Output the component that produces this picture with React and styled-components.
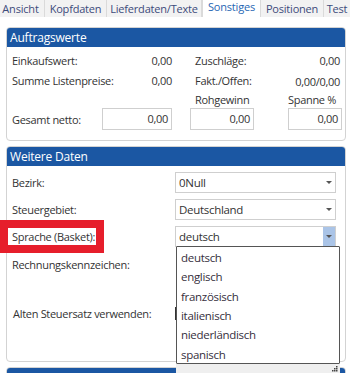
import React from 'react';
import styled, { createGlobalStyle } from 'styled-components';

const Global = createGlobalStyle`
  html, body { margin: 0; padding: 0; overflow: hidden; background: #fff; }
  body {
    font-family: "Open Sans", "Noto Sans", sans-serif;
    font-size: 11px;
    letter-spacing: -0.3px;
    color: #333;
  }
  *, *::before, *::after { box-sizing: border-box; }
`;

const Page = styled.div`
  width: 350px;
  height: 373px;
  overflow: hidden;
`;

const TabBar = styled.div`
  display: flex;
  height: 17px;
  margin-left: -3px;
  white-space: nowrap;
  overflow: hidden;
`;

const Tab = styled.div`
  width: ${p => p.$w}px;
  height: 17px;
  line-height: ${p => (p.$active ? '14px' : '17px')};
  text-align: center;
  font-size: 11px;
  letter-spacing: -0.2px;
  color: ${p => (p.$active ? '#1f66b3' : '#3d4b7b')};
  background: ${p => (p.$active ? '#fff' : '#f2f2f2')};
  border-right: 1px solid #dadada;
  border-left: ${p => (p.$active ? '1px solid #dadada' : 'none')};
  flex: none;
`;

const Content = styled.div`
  padding: 10px 4px 0 6px;
`;

const Panel = styled.section`
  border: 1px solid #d3d3d3;
  border-radius: 4px;
  background: #fff;
  & + & { margin-top: 5px; }
`;

const PanelHeader = styled.div`
  height: 19px;
  line-height: 19px;
  background: #1b57a3;
  color: #fff;
  padding-left: 3px;
  font-size: 12px;
  letter-spacing: -0.2px;
  border-radius: 3px 3px 0 0;
`;

const ValuesGrid = styled.div`
  display: grid;
  grid-template-columns: 90px 70px 18px 64px 34px 54px;
  grid-template-rows: 17px 22px 17px 22px;
  padding: 5px 3px 10px 5px;
  align-items: center;
`;

const Label = styled.div`
  grid-column: ${p => p.$col || 'auto'};
  padding-left: ${p => p.$pl || 0}px;
  white-space: nowrap;
`;

const Value = styled.div`
  grid-column: ${p => p.$col || 'auto'};
  text-align: right;
  white-space: nowrap;
  padding-top: ${p => p.$pt || 0}px;
  padding-right: ${p => p.$pr || 0}px;
`;

const NumInput = styled.div`
  grid-column: ${p => p.$col};
  height: 22px;
  line-height: 20px;
  border: 1px solid #cfcfcf;
  text-align: right;
  padding-right: 3px;
  background: #fff;
`;

const DataGrid = styled.div`
  display: grid;
  grid-template-columns: 163px 161px;
  grid-template-rows: 21px 21px 21px 44px 20px;
  row-gap: 6px;
  padding: 6px 0 38px 5px;
  align-items: center;
`;

const FieldLabel = styled.div`
  grid-column: 1;
  white-space: nowrap;
  align-self: ${p => (p.$top ? 'start' : 'center')};
  padding-top: ${p => (p.$top ? '4px' : '0')};
  padding-left: ${p => p.$pl || 0}px;
  position: relative;
  ${p =>
    p.$marked &&
    `
    &::after {
      content: "";
      position: absolute;
      left: -12px;
      top: -9px;
      width: 104px;
      height: 33px;
      border: 8px solid #e61e2b;
      pointer-events: none;
    }
  `}
`;

const Select = styled.div`
  grid-column: 2;
  position: relative;
  display: flex;
  align-items: center;
  height: 21px;
  border: 1px solid #cfcfcf;
  background: #fff;
  padding-left: 3px;
  z-index: ${p => (p.$open ? 5 : 1)};
`;

const SelectText = styled.span`
  flex: 1;
  white-space: nowrap;
  font-size: 11.5px;
`;

const ArrowBtn = styled.span`
  width: 12px;
  align-self: stretch;
  display: flex;
  align-items: center;
  justify-content: center;
  background: ${p => (p.$open ? '#aac4e7' : 'transparent')};
  &::before {
    content: "";
    border-left: 3px solid transparent;
    border-right: 3px solid transparent;
    border-top: 3px solid #555;
  }
`;

const Popup = styled.div`
  position: absolute;
  left: 0px;
  top: 19px;
  width: 164px;
  z-index: 10;
`;

const List = styled.ul`
  list-style: none;
  margin: 0;
  padding: 1px 0 0;
  background: #fff;
  border: 1px solid #555;
  border-radius: 1px;
  height: 118px;
`;

const Item = styled.li`
  height: 19.35px;
  line-height: 19.35px;
  padding-left: 4px;
  font-size: 11.5px;
  color: #362f3d;
  white-space: nowrap;
`;

const Grip = styled.div`
  height: 10px;
  background: #efefef;
  display: flex;
  justify-content: flex-end;
  align-items: flex-start;
  padding: 2px 2px 0 0;
`;

const Check = styled.span`
  grid-column: 2;
  width: 13px;
  height: 13px;
  border: 1px solid #333;
  background: #fff;
  align-self: center;
`;

const EmptyBody = styled.div`
  height: 40px;
`;

const tabs = [
  { t: 'Ansicht', w: 48 },
  { t: 'Kopfdaten', w: 62 },
  { t: 'Lieferdaten/Texte', w: 95 },
  { t: 'Sonstiges', w: 59 },
  { t: 'Positionen', w: 63 },
  { t: 'Test', w: 27 },
];
const langs = ['deutsch', 'englisch', 'französisch', 'italienisch', 'niederländisch', 'spanisch'];

export default function App() {
  return (
    <Page>
      <Global />
      <TabBar>
        {tabs.map(({ t, w }) => (
          <Tab key={t} $w={w} $active={t === 'Sonstiges'}>{t}</Tab>
        ))}
      </TabBar>
      <Content>
        <Panel>
          <PanelHeader>Auftragswerte</PanelHeader>
          <ValuesGrid>
            <Label $col="1">Einkaufswert:</Label>
            <Value $col="2">0,00</Value>
            <Label $col="4" $pl={5}>Zuschläge:</Label>
            <Value $col="5 / 7" $pr={2}>0,00</Value>

            <Label $col="1">Summe Listenpreise:</Label>
            <Value $col="2">0,00</Value>
            <Label $col="4" $pl={5}>Fakt./Offen:</Label>
            <Value $col="5 / 7" $pt={2} $pr={2}>0,00/0,00</Value>

            <Label $col="4 / 6" $pl={5}>Rohgewinn</Label>
            <Label $col="6">Spanne %</Label>

            <Label $col="1">Gesamt netto:</Label>
            <NumInput $col="2">0,00</NumInput>
            <NumInput $col="4">0,00</NumInput>
            <NumInput $col="6">0,00</NumInput>
          </ValuesGrid>
        </Panel>

        <Panel>
          <PanelHeader>Weitere Daten</PanelHeader>
          <DataGrid>
            <FieldLabel>Bezirk:</FieldLabel>
            <Select>
              <SelectText>0Null</SelectText>
              <ArrowBtn />
            </Select>

            <FieldLabel>Steuergebiet:</FieldLabel>
            <Select>
              <SelectText>Deutschland</SelectText>
              <ArrowBtn />
            </Select>

            <FieldLabel $marked>Sprache (Basket):</FieldLabel>
            <Select $open>
              <SelectText>deutsch</SelectText>
              <ArrowBtn $open />
              <Popup>
                <List>
                  {langs.map(l => (
                    <Item key={l}>{l}</Item>
                  ))}
                </List>
                <Grip>
                  <svg width="6" height="6" viewBox="0 0 6 6">
                    <rect x="4" y="0" width="1.5" height="1.5" fill="#444" />
                    <rect x="2" y="2" width="1.5" height="1.5" fill="#444" />
                    <rect x="4" y="2" width="1.5" height="1.5" fill="#444" />
                    <rect x="0" y="4" width="1.5" height="1.5" fill="#444" />
                    <rect x="2" y="4" width="1.5" height="1.5" fill="#444" />
                    <rect x="4" y="4" width="1.5" height="1.5" fill="#444" />
                  </svg>
                </Grip>
              </Popup>
            </Select>

            <FieldLabel $top>Rechnungskennzeichen:</FieldLabel>
            <span />

            <FieldLabel $pl={1}>Alten Steuersatz verwenden:</FieldLabel>
            <Check />
          </DataGrid>
        </Panel>

        <Panel>
          <PanelHeader />
          <EmptyBody />
        </Panel>
      </Content>
    </Page>
  );
}
